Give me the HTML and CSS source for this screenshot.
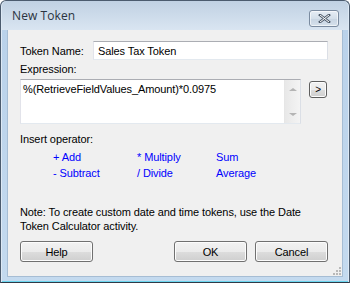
FILE: index.html
```html
<!DOCTYPE html>
<html lang="en">
<head>
  <meta charset="UTF-8">
  <title>New Token</title>
  <link rel="stylesheet" href="styles.css">
</head>
<body>
  <div class="window">
    <div class="titlebar">
      <span class="title">New Token</span>
      <button class="close" aria-label="Close">
        <svg width="13" height="9" viewBox="0 0 13 9">
          <path d="M2 1 L11 8 M11 1 L2 8" stroke="#4d5a6a" stroke-width="2.6" stroke-linecap="square"/>
          <path d="M2 1 L11 8 M11 1 L2 8" stroke="#ffffff" stroke-width="1"/>
        </svg>
      </button>
    </div>

    <div class="client">
      <div class="name-row">
        <label for="tokenName">Token Name:</label>
        <input type="text" id="tokenName" value="Sales Tax Token">
      </div>

      <div class="caption">Expression:</div>
      <div class="expr-row">
        <div class="expr-box">
          <div class="expr-text">%(RetrieveFieldValues_Amount)*0.0975</div>
          <div class="scrollbar">
            <span class="arrow up"></span>
            <span class="arrow down"></span>
          </div>
        </div>
        <button class="btn small">&gt;</button>
      </div>

      <div class="caption insert">Insert operator:</div>
      <div class="operators">
        <a>+ Add</a>
        <a>* Multiply</a>
        <a>Sum</a>
        <a>- Subtract</a>
        <a>/ Divide</a>
        <a>Average</a>
      </div>

      <p class="note">Note: To create custom date and time tokens, use the Date Token Calculator activity.</p>

      <div class="buttons">
        <button class="btn">Help</button>
        <div class="right">
          <button class="btn">OK</button>
          <button class="btn">Cancel</button>
        </div>
      </div>

      <div class="grip">
        <svg width="8" height="8" viewBox="0 0 8 8" fill="#b8b8b8">
          <rect x="6" y="0" width="2" height="2"/>
          <rect x="3" y="3" width="2" height="2"/>
          <rect x="6" y="3" width="2" height="2"/>
          <rect x="0" y="6" width="2" height="2"/>
          <rect x="3" y="6" width="2" height="2"/>
          <rect x="6" y="6" width="2" height="2"/>
        </svg>
      </div>
    </div>
  </div>
</body>
</html>
```

FILE: styles.css
```css
    html, body {
      margin: 0;
      padding: 0;
      background: #ffffff;
    }

    body {
      font-family: "Liberation Sans", Arial, sans-serif;
      font-size: 11px;
      letter-spacing: -0.1px;
      color: #000;
    }

    .window {
      width: 350px;
      height: 283px;
      box-sizing: border-box;
      border: 1px solid #4b5b6e;
      border-bottom-color: #2f3a48;
      border-radius: 6px 6px 0 0;
      padding: 0 6px 5px 6px;
      background: linear-gradient(to bottom, #c0d1e3 0, #d9e5f1 29px, #bad2ea 29px, #c4daef 100%);
      box-shadow: inset 1px 0 0 #dde9f5, inset -1px 0 0 #dde9f5, inset 0 -1px 0 #6bd6ef;
      display: flex;
      flex-direction: column;
    }

    .titlebar {
      height: 29px;
      display: flex;
      align-items: flex-start;
      justify-content: space-between;
      flex-shrink: 0;
    }

    .title {
      font-family: "Open Sans", "Noto Sans", sans-serif;
      font-size: 12px;
      color: #2a3340;
      padding: 6px 0 0 5px;
      letter-spacing: 0.1px;
    }

    .close {
      margin: 9px 4px 0 0;
      width: 30px;
      height: 17px;
      padding: 0;
      border: 1px solid #7a8ba0;
      border-radius: 3px;
      background: linear-gradient(to bottom, #e6edf5 0, #d4dfea 50%, #c7d4e2 51%, #d6e1ec 100%);
      box-shadow: inset 0 0 0 1px rgba(255, 255, 255, 0.6);
      display: flex;
      align-items: center;
      justify-content: center;
    }

    .client {
      flex: 1;
      background: #f0f0f0;
      border: 1px solid #a6bdd4;
      border-top: none;
      padding: 11px 13px 0 12px;
      position: relative;
      display: flex;
      flex-direction: column;
    }

    .name-row {
      display: flex;
      align-items: center;
    }

    .name-row label {
      width: 73px;
    }

    .name-row input {
      width: 235px;
      height: 19px;
      box-sizing: border-box;
      border: 1px solid #abadb3;
      border-color: #abadb3 #dbdfe6 #e3e9ef #e2e3ea;
      padding: 0 4px;
      font-family: inherit;
      font-size: 11px;
      letter-spacing: -0.1px;
      background: #fff;
      outline: none;
    }

    .caption {
      margin-top: 2px;
      line-height: 14px;
    }

    .expr-row {
      display: flex;
      align-items: flex-start;
      margin-top: 3px;
    }

    .expr-box {
      width: 281px;
      height: 45px;
      box-sizing: border-box;
      border: 1px solid #abadb3;
      border-color: #abadb3 #dbdfe6 #e3e9ef #e2e3ea;
      background: #fff;
      display: flex;
    }

    .expr-text {
      flex: 1;
      padding: 3px 0 0 2px;
      line-height: 13px;
    }

    .scrollbar {
      width: 16px;
      background: linear-gradient(to right, #e8e8e8, #f4f4f4);
      border-left: 1px solid #e6e6e6;
      display: flex;
      flex-direction: column;
      justify-content: space-between;
      align-items: center;
      padding: 8px 0 7px;
      box-sizing: border-box;
    }

    .arrow {
      width: 0;
      height: 0;
      border-left: 4px solid transparent;
      border-right: 4px solid transparent;
    }

    .arrow.up {
      border-bottom: 3px solid #b4b4b4;
    }

    .arrow.down {
      border-top: 3px solid #b4b4b4;
    }

    .btn {
      width: 73px;
      height: 21px;
      box-sizing: border-box;
      border: 1px solid #707070;
      border-radius: 3px;
      background: linear-gradient(to bottom, #f2f2f2 0, #ebebeb 50%, #dddddd 51%, #cfcfcf 100%);
      box-shadow: inset 0 0 0 1px #fcfcfc;
      font-family: inherit;
      font-size: 11px;
      letter-spacing: -0.1px;
      color: #000;
      padding: 0;
    }

    .btn.small {
      width: 18px;
      height: 17px;
      margin: 2px 0 0 8px;
      font-size: 10px;
      line-height: 13px;
      border-color: #5e5e5e;
    }

    .insert {
      margin-top: 8px;
    }

    .operators {
      display: grid;
      grid-template-columns: 84px 79px auto;
      grid-auto-rows: 16px;
      margin: 3px 0 0 33px;
      color: #0000ff;
      line-height: 16px;
    }

    .note {
      margin: 24px 0 0 0;
      line-height: 14px;
      width: 300px;
    }

    .buttons {
      display: flex;
      justify-content: space-between;
      margin-top: 8px;
      width: 308px;
    }

    .buttons .right {
      display: flex;
      gap: 8px;
    }

    .grip {
      position: absolute;
      right: 1px;
      bottom: 1px;
      line-height: 0;
    }
```
